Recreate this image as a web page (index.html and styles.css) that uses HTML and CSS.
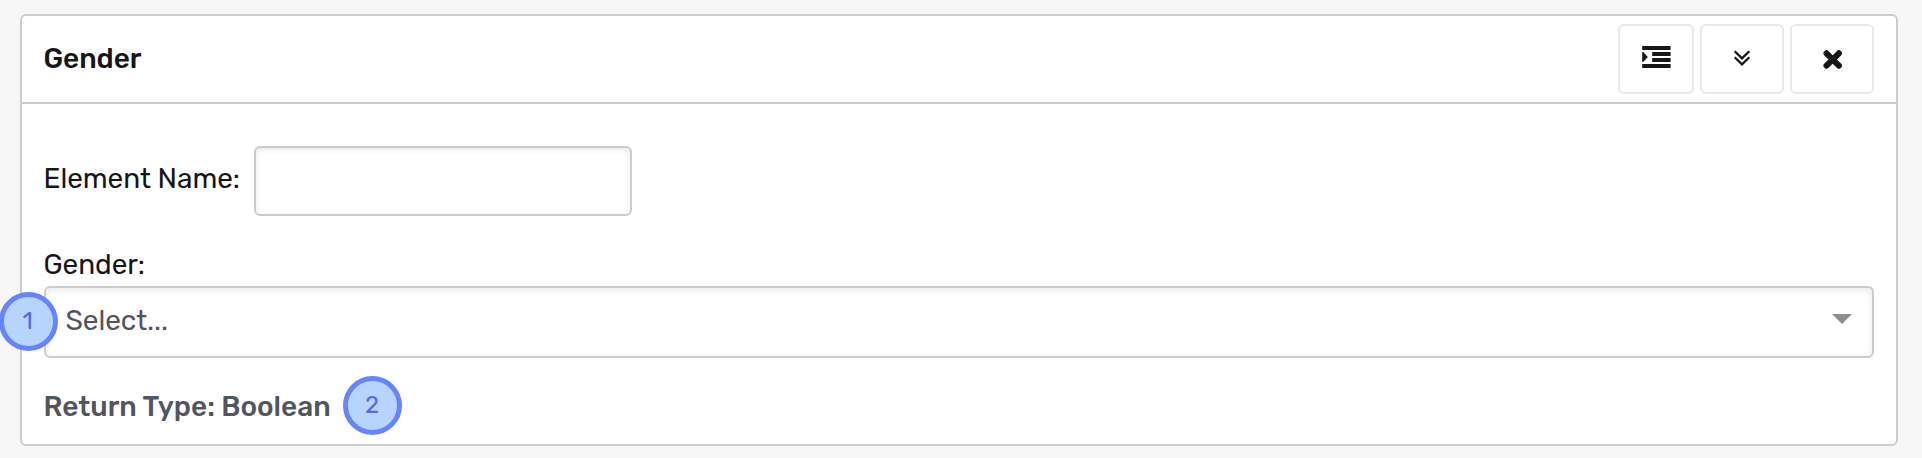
FILE: index.html
```html
<!DOCTYPE html>
<html lang="en">
<head>
<meta charset="utf-8">
<title>Gender</title>
<link rel="stylesheet" href="styles.css">
</head>
<body>
<section class="card">
  <header class="card-header">
    <h2 class="title">Gender</h2>
    <div class="actions">
      <button class="btn btn-indent" aria-label="Indent">
        <svg width="30" height="22" viewBox="0 0 30 22"><path d="M1.2 0h28.4v4H1.2zM11.2 6h18.4v4H11.2zM11.2 12h18.4v4H11.2zM1.2 18h28.4v4H1.2zM1.2 6H2.2l4.6 5-4.6 5H1.2z"/></svg>
      </button>
      <button class="btn btn-expand" aria-label="Expand">
        <svg width="16" height="16" viewBox="0 0 16 16" class="chevrons"><path d="M.7 1.2l7.3 7.1 7.3-7.1M.7 7.2l7.3 7.1 7.3-7.1"/></svg>
      </button>
      <button class="btn btn-close" aria-label="Remove">
        <svg width="20" height="20" viewBox="0 0 20 20" class="cross"><path d="M4.5 4.3l12.4 12.4M16.9 4.3L4.5 16.7"/></svg>
      </button>
    </div>
  </header>
  <div class="card-body">
    <div class="name-row">
      <label class="label" for="name">Element Name:</label>
      <input class="field" id="name" type="text">
    </div>
    <div class="label gender-label">Gender:</div>
    <div class="select">
      <span>Select...</span>
      <svg class="caret" width="20" height="10" viewBox="0 0 20 10"><path d="M0 0h20L10 10z"/></svg>
    </div>
    <div class="return-type">Return Type: Boolean</div>
  </div>
</section>
<div class="badge badge-one">1</div>
<div class="badge badge-two">2</div>
</body>
</html>
```
FILE: styles.css
```css
* { box-sizing: border-box; }
body {
  margin: 0;
  height: 458px;
  padding: 14px 24px 12px 20px;
  background: #f7f7f7;
  color: #151617;
  font: 28px/36px Rubik, Roboto, sans-serif;
  letter-spacing: -.06px;
  position: relative;
  overflow: hidden;
}
.card {
  height: 432px;
  background: #fff;
  border: 2px solid #ccc;
  border-radius: 6px;
}
.card-header {
  height: 88px;
  padding: 0 22px 0 21.5px;
  display: flex;
  justify-content: space-between;
  align-items: flex-start;
  border-bottom: 2px solid #ccc;
}
.title { margin: 25px 0 0; font-size: 28px; font-weight: 500; line-height: 36px; }
.actions { display: flex; gap: 6px; margin-top: 8px; }
.btn {
  width: 84px;
  height: 70px;
  padding: 0 0 4px;
  display: flex;
  align-items: center;
  justify-content: center;
  background: #fff;
  border: 2px solid #e8e8e8;
  border-radius: 6px;
  fill: #151617;
}
.btn-indent { width: 76px; }
.btn-expand { padding-bottom: 2px; }
.btn-close { padding-bottom: 1px; }
.chevrons { fill: none; stroke: #151617; stroke-width: 2.3; overflow: visible; }
.cross { fill: none; stroke: #151617; stroke-width: 6; stroke-linecap: round; }
.card-body { padding: 42px 22px 0; }
.name-row { display: flex; align-items: flex-start; height: 70px; }
.name-row .label { width: 210px; padding-top: 15px; }
.label { white-space: nowrap; text-indent: -.5px; }
.field {
  width: 378px;
  height: 70px;
  padding: 0 20px;
  font: inherit;
}
.field, .select {
  background: #fff;
  border: 2px solid #ccc;
  border-radius: 6px;
  box-shadow: inset 0 2px 6px rgba(0, 0, 0, .09);
}
.gender-label { height: 70px; padding-top: 31px; }
.select {
  height: 72px;
  padding: 0 20px 0 19.5px;
  display: flex;
  justify-content: space-between;
  align-items: flex-start;
  color: #515560;
  line-height: 66px;
}
.caret { margin-top: 26px; fill: #8c8c8c; }
.return-type {
  margin-top: 31px;
  color: #515560;
  font-weight: 500;
  text-indent: -.5px;
  letter-spacing: 0;
}
.badge {
  position: absolute;
  width: 59px;
  height: 59px;
  padding-right: 1px;
  border: 5px solid #6684ff;
  border-radius: 50%;
  background: #b7d4ff;
  color: #5967e8;
  font-size: 24px;
  font-weight: 370;
  line-height: 49px;
  text-align: center;
}
.badge-one { left: -1px; top: 292px; padding-right: 2px; }
.badge-two { left: 343px; top: 376px; }
```
